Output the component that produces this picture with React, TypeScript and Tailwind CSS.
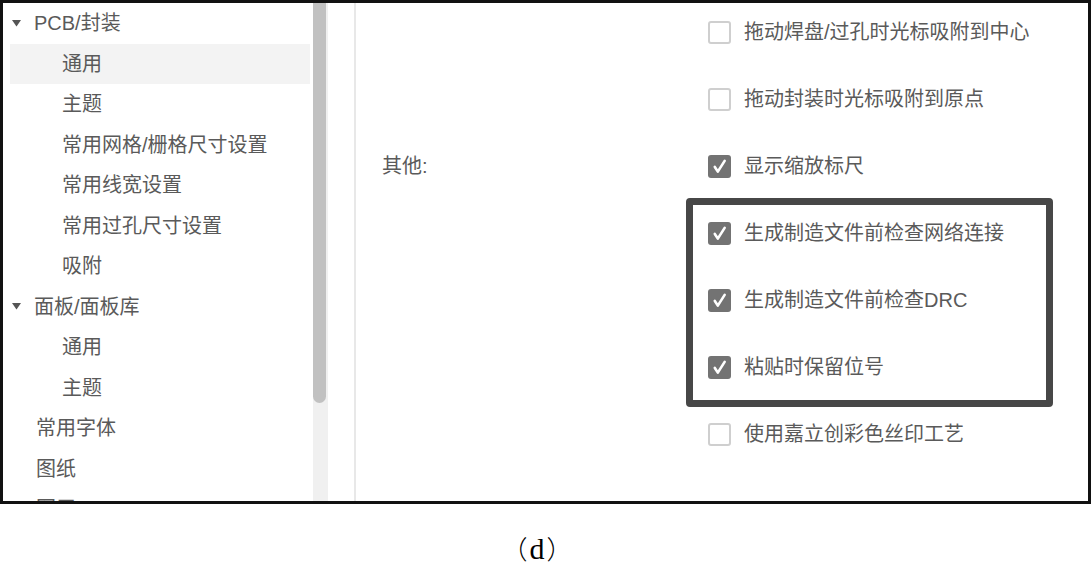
import React from "react";

type NavItem = { label: string; level: 0 | 1 | 2; open?: boolean; active?: boolean };

const navItems: NavItem[] = [
  { label: "PCB/封装", level: 0, open: true },
  { label: "通用", level: 2, active: true },
  { label: "主题", level: 2 },
  { label: "常用网格/栅格尺寸设置", level: 2 },
  { label: "常用线宽设置", level: 2 },
  { label: "常用过孔尺寸设置", level: 2 },
  { label: "吸附", level: 2 },
  { label: "面板/面板库", level: 0, open: true },
  { label: "通用", level: 2 },
  { label: "主题", level: 2 },
  { label: "常用字体", level: 1 },
  { label: "图纸", level: 1 },
  { label: "图层", level: 1 },
];

type Option = { label: string; checked: boolean; group?: string };

const options: Option[] = [
  { label: "拖动焊盘/过孔时光标吸附到中心", checked: false },
  { label: "拖动封装时光标吸附到原点", checked: false },
  { label: "显示缩放标尺", checked: true, group: "其他:" },
  { label: "生成制造文件前检查网络连接", checked: true },
  { label: "生成制造文件前检查DRC", checked: true },
  { label: "粘贴时保留位号", checked: true },
  { label: "使用嘉立创彩色丝印工艺", checked: false },
];

const Checkbox = ({ checked }: { checked: boolean }) =>
  checked ? (
    <span className="flex h-[23px] w-[23px] shrink-0 items-center justify-center rounded-[3px] bg-[#737373]">
      <svg width="15" height="16" viewBox="0 0 16 16">
        <path
          d="M3 9 L6.2 14 L13.5 2.5"
          fill="none"
          stroke="#fff"
          strokeWidth="2.8"
          strokeLinecap="round"
          strokeLinejoin="round"
        />
      </svg>
    </span>
  ) : (
    <span className="h-[23px] w-[23px] shrink-0 rounded-[3px] border-2 border-[#cfcfcf] bg-white" />
  );

export default function App() {
  return (
    <div
      className="h-[563px] w-[1092px] overflow-hidden bg-white text-[20px] text-[#5a5a5a]"
      style={{ fontFamily: '"Liberation Sans", "Noto Sans CJK SC", sans-serif' }}
    >
      {/* screenshot frame */}
      <div className="flex h-[504px] w-[1091px] overflow-hidden border-[3px] border-[#111]">
        {/* sidebar tree */}
        <div className="w-[310px] shrink-0 overflow-hidden pl-[7px] pr-[3px]">
          {navItems.map((item, i) => (
            <div
              key={i}
              className={`flex h-[40.5px] items-center leading-none ${
                item.active ? "bg-[#f3f3f3]" : ""
              } ${item.level === 2 ? "pl-[52px]" : item.level === 1 ? "pl-[26px]" : "pl-[2px]"}`}
            >
              {item.open && (
                <svg width="9" height="7" viewBox="0 0 9 7" className="mr-[13px] shrink-0">
                  <path d="M0 0 H9 L4.5 6.5 Z" fill="#555" />
                </svg>
              )}
              <span className="whitespace-nowrap">{item.label}</span>
            </div>
          ))}
        </div>

        {/* scrollbar */}
        <div className="w-[15px] shrink-0 bg-[#f0f0f0]">
          <div className="h-[400px] w-[13px] rounded-b-full bg-[#c1c1c1]" />
        </div>

        <div className="w-[26px] shrink-0" />
        <div className="w-[2px] shrink-0 bg-[#e8e8e8]" />

        {/* settings panel */}
        <div className="relative flex-1">
          <div className="-mt-[4.5px] pl-[26px]">
            {options.map((opt, i) => (
              <div key={i} className="flex h-[67px] items-center leading-none">
                <div className="w-[326px] shrink-0">{opt.group}</div>
                <Checkbox checked={opt.checked} />
                <span className="ml-[13px] whitespace-nowrap">{opt.label}</span>
              </div>
            ))}
          </div>

          {/* annotation box drawn over the screenshot */}
          <div className="absolute left-[330px] top-[195px] h-[209px] w-[367px] rounded-[4px] border-[7px] border-[#474747]" />
        </div>
      </div>

      {/* figure caption */}
      <div className="flex items-baseline justify-center pr-[18px] pt-[30px] text-black">
        <span
          className="mr-[2px] text-[26px] leading-[28px] font-light"
          style={{ fontFamily: '"Noto Sans CJK SC", sans-serif' }}
        >
          （
        </span>
        <span className="text-[30px] leading-[28px]" style={{ fontFamily: '"Liberation Serif", serif' }}>
          d
        </span>
        <span
          className="ml-[2px] text-[26px] leading-[28px] font-light"
          style={{ fontFamily: '"Noto Sans CJK SC", sans-serif' }}
        >
          ）
        </span>
      </div>
    </div>
  );
}
